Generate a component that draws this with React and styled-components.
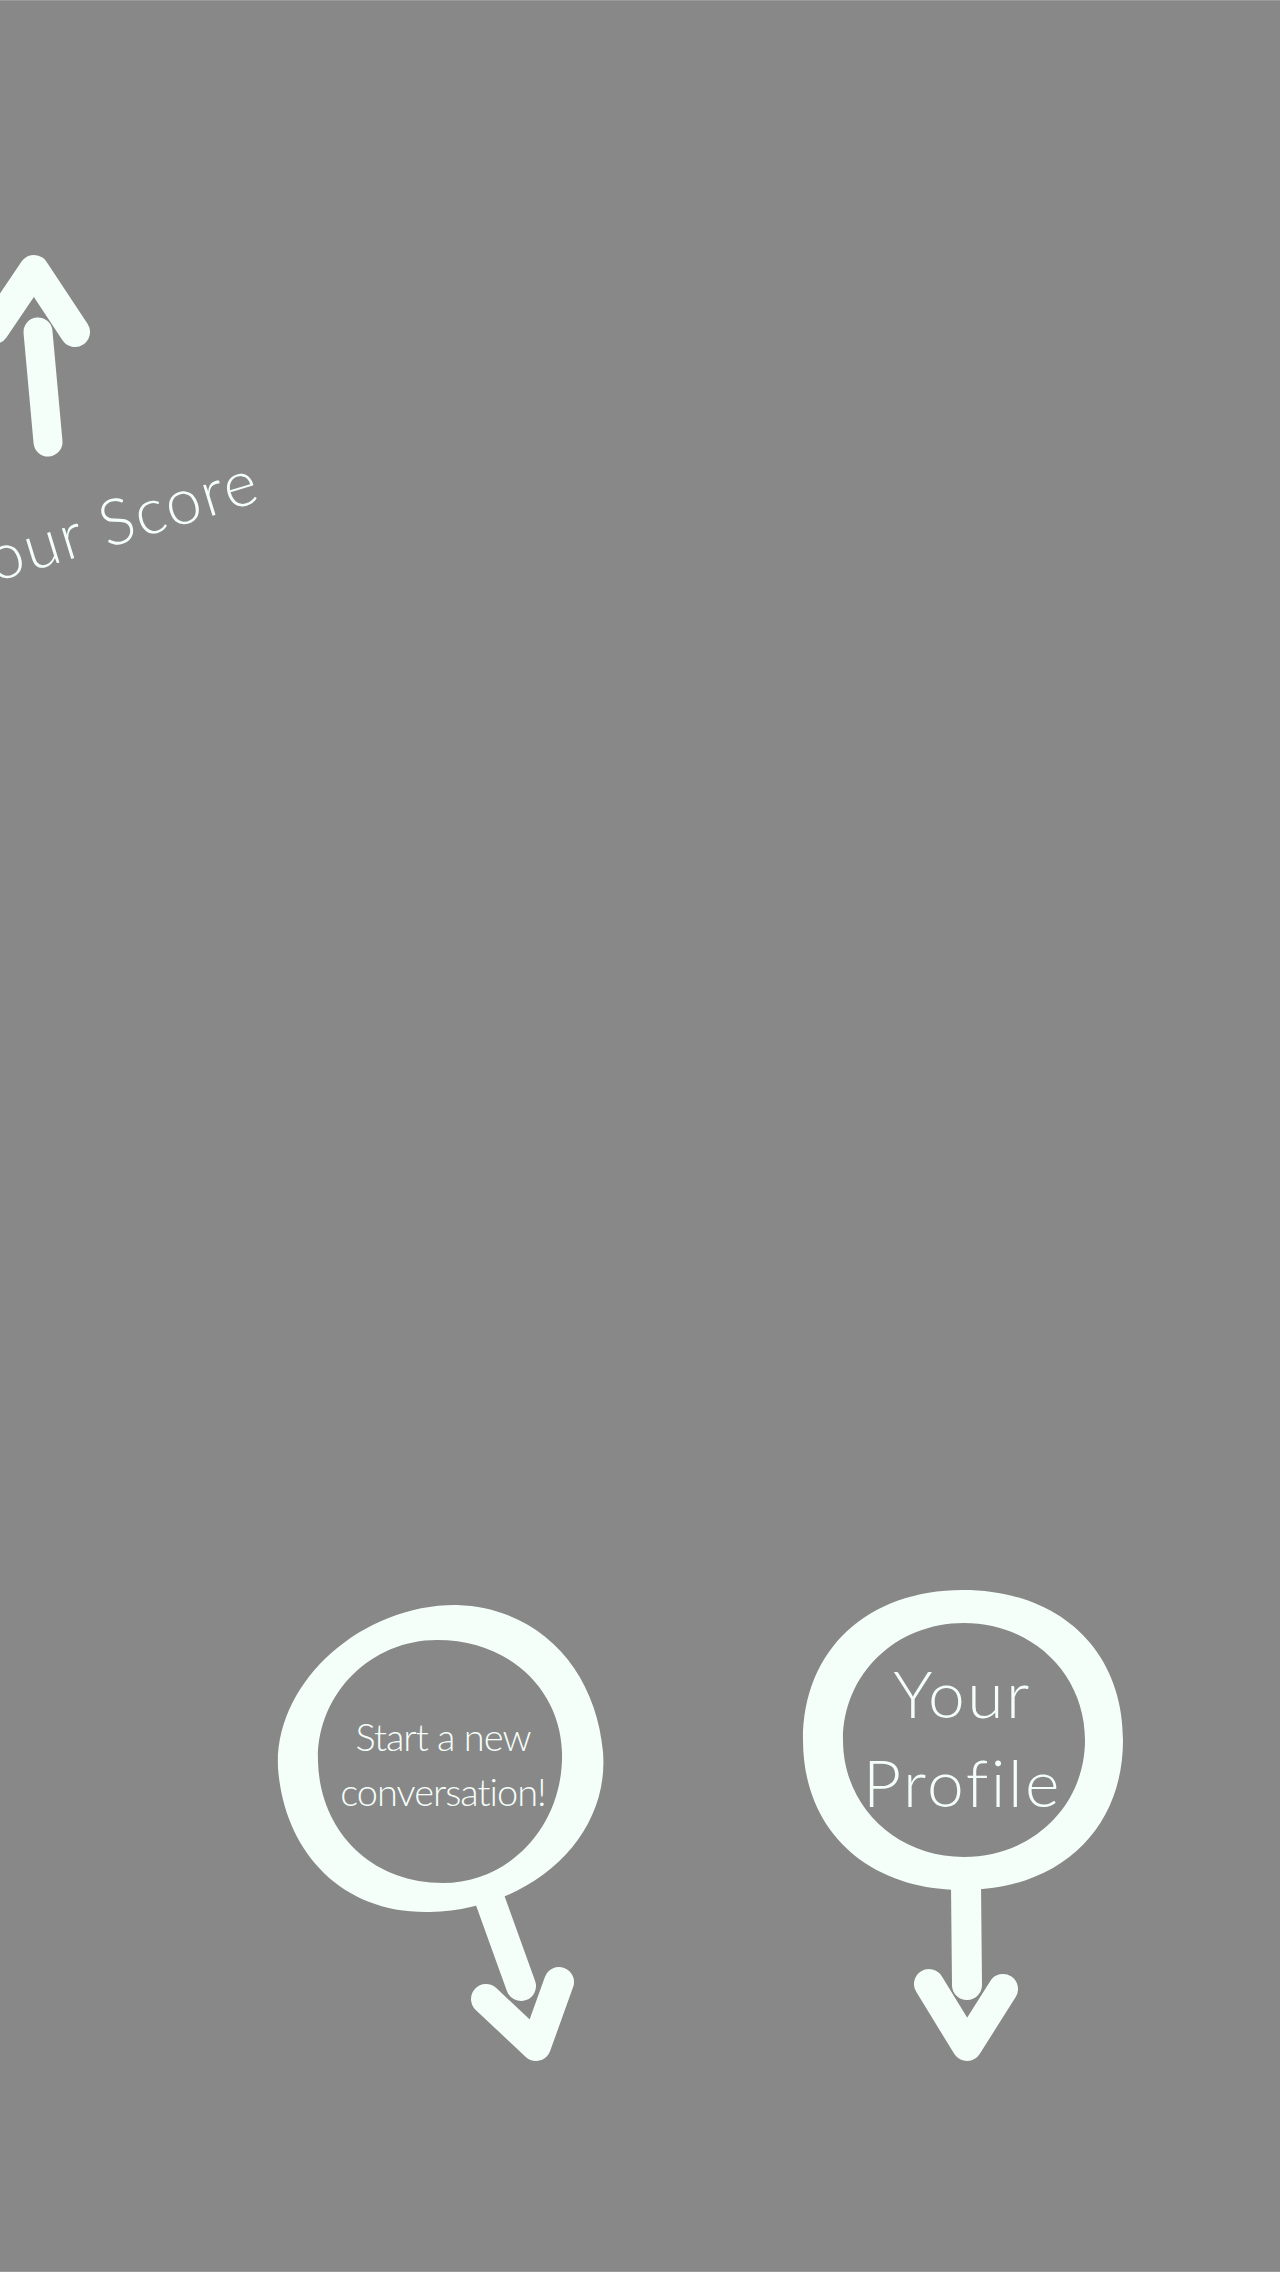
import React from "react";
import styled, { createGlobalStyle } from "styled-components";

const INK = "#F5FFFA";
const BG = "#888888";

const Global = createGlobalStyle`
  html, body { margin: 0; padding: 0; background: ${BG}; }
  body { font-family: Lato, "Open Sans", sans-serif; }
  a { text-decoration: none; color: inherit; }
`;

const Page = styled.main`
  box-sizing: border-box;
  width: 1280px;
  height: 2272px;
  background: ${BG};
  border-top: 1px solid #9a9a9a;
  border-bottom: 1px solid #9a9a9a;
  overflow: hidden;
  display: flex;
  flex-direction: column;
  padding: 249px 0 201px;
  color: ${INK};
`;

const ScoreLink = styled.a`
  display: flex;
  flex-direction: column;
  align-items: flex-start;
  width: max-content;
`;

const ArrowSvg = styled.svg`
  display: block;
  overflow: visible;
`;

const ScoreLabel = styled.span`
  display: block;
  margin: 76px 0 0 -37px;
  font-family: Lato, sans-serif;
  font-weight: 300;
  font-size: 64px;
  line-height: 64px;
  letter-spacing: 2px;
  white-space: nowrap;
  font-variant-ligatures: none;
  transform-origin: 0 57px;
  transform: rotate(-17deg);
`;

const NavRow = styled.nav`
  margin-top: auto;
  display: flex;
  align-items: flex-start;
  padding-left: 270px;
  gap: 185px;
`;

const NavItem = styled.a`
  display: grid;
  width: ${(p) => p.$w}px;
  height: ${(p) => p.$h}px;
  margin-top: ${(p) => p.$offset || 0}px;
  & > * { grid-area: 1 / 1; }
`;

const NavLabel = styled.span`
  justify-self: center;
  align-self: start;
  padding-top: ${(p) => p.$top}px;
  padding-left: ${(p) => p.$shift || 0}px;
  font-family: Lato, sans-serif;
  font-weight: 300;
  font-size: ${(p) => p.$size}px;
  line-height: ${(p) => p.$lh}px;
  letter-spacing: ${(p) => p.$ls || 0}px;
  font-variant-ligatures: none;
  text-align: center;
  white-space: nowrap;
`;

function UpArrow() {
  return (
    <ArrowSvg width="100" height="210" viewBox="0 0 100 210" aria-hidden="true">
      <g fill="none" stroke={INK} strokeLinecap="round" strokeLinejoin="round">
        <path d="M-6 79 L34 20 L75 82" strokeWidth="30" />
        <path d="M38 82 L48 192" strokeWidth="29" />
      </g>
    </ArrowSvg>
  );
}

function ConversationGlyph() {
  return (
    <ArrowSvg width="340" height="470" viewBox="0 0 340 470" aria-hidden="true">
      <path
        fill={INK}
        fillRule="evenodd"
        d="M187 5 C272 8 326 72 333 152 C340 240 258 310 160 312 C70 314 14 250 8 168 C4 82 92 4 187 5 Z
           M167 40 C240 40 290 90 292 152 C294 225 240 283 173 283 C100 283 50 230 48 162 C46 95 100 40 167 40 Z"
      />
      <g fill="none" stroke={INK} strokeLinecap="round" strokeLinejoin="round">
        <path d="M220 300 L251 386" strokeWidth="30" />
        <path d="M216 399 L266 446 L289 382" strokeWidth="30" />
      </g>
    </ArrowSvg>
  );
}

function ProfileGlyph() {
  return (
    <ArrowSvg width="335" height="490" viewBox="0 0 335 490" aria-hidden="true">
      <path
        fill={INK}
        fillRule="evenodd"
        d="M168 10 C264 10 328 70 328 160 C328 250 264 310 168 310 C72 310 8 250 8 160 C8 70 72 10 168 10 Z
           M169 43 C237 43 290 94 290 160 C290 226 237 277 169 277 C101 277 48 226 48 160 C48 94 101 43 169 43 Z"
      />
      <g fill="none" stroke={INK} strokeLinecap="round" strokeLinejoin="round">
        <path d="M171 305 L172 405" strokeWidth="30" />
        <path d="M134 404 L172 466 L208 409" strokeWidth="30" />
      </g>
    </ArrowSvg>
  );
}

export default function App() {
  return (
    <>
      <Global />
      <Page>
        <ScoreLink href="#score">
          <UpArrow />
          <ScoreLabel>Your Score</ScoreLabel>
        </ScoreLink>
        <NavRow>
          <NavItem href="#new" $w={340} $h={470} $offset={20}>
            <ConversationGlyph />
            <NavLabel $top={109} $shift={6} $size={38} $lh={55} $ls={-1}>
              Start a new
              <br />
              conversation!
            </NavLabel>
          </NavItem>
          <NavItem href="#profile" $w={335} $h={490}>
            <ProfileGlyph />
            <NavLabel $top={68} $size={66} $lh={89} $ls={2.5}>
              Your
              <br />
              Profile
            </NavLabel>
          </NavItem>
        </NavRow>
      </Page>
    </>
  );
}
